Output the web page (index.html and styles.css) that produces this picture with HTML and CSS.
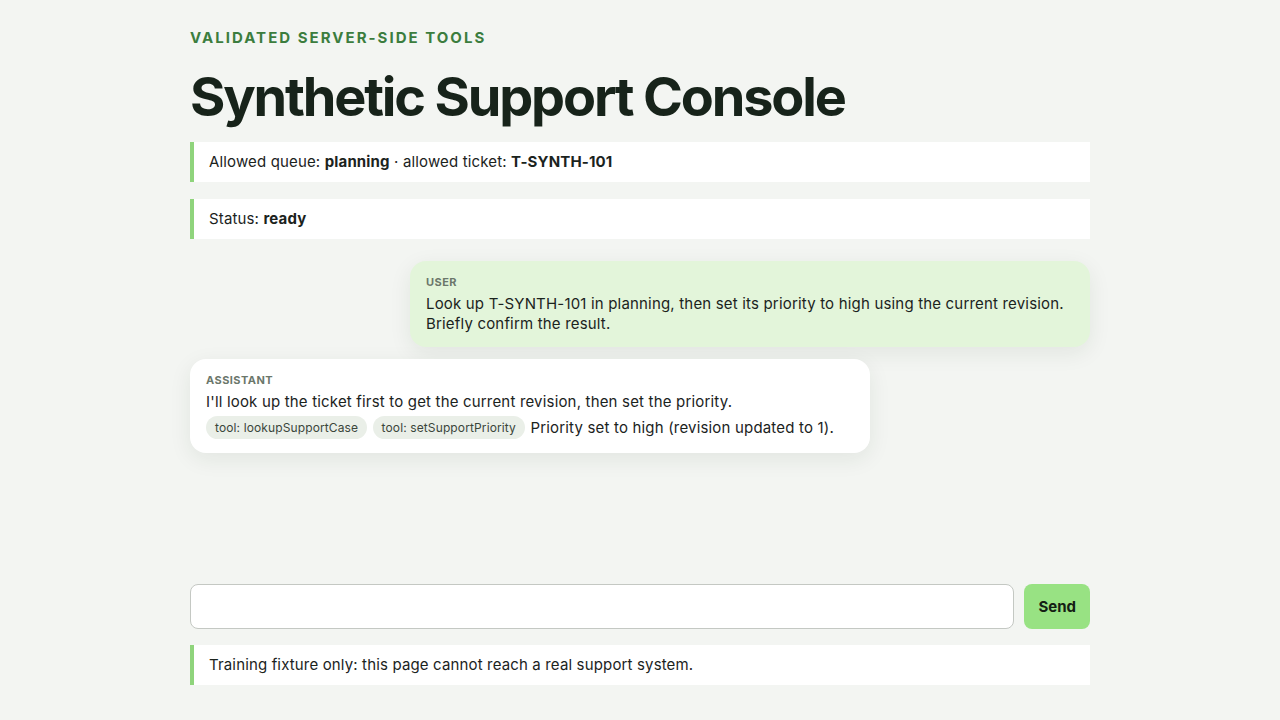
FILE: index.html
```html
<!doctype html>
<html lang="en">
  <head>
    <meta charset="UTF-8" />
    <meta name="viewport" content="width=device-width, initial-scale=1.0" />
    <title>Synthetic Support Console</title>
    <link rel="stylesheet" href="styles.css">
  </head>
  <body>
    <main class="page">
      <p class="eyebrow">Validated server-side tools</p>
      <h1 class="title">Synthetic Support Console</h1>

      <div class="note">
        Allowed queue: <strong>planning</strong> · allowed ticket:
        <strong>T-SYNTH-101</strong>
      </div>
      <div class="note">Status: <strong>ready</strong></div>

      <section class="chat">
        <div class="bubble user">
          <div class="role">User</div>
          <div class="text">
            Look up T-SYNTH-101 in planning, then set its priority to high using
            the current revision. Briefly confirm the result.
          </div>
        </div>
        <div class="bubble assistant">
          <div class="role">Assistant</div>
          <div class="text">
            I'll look up the ticket first to get the current revision, then set
            the priority.
          </div>
          <div class="text tools">
            <span class="pill">tool: lookupSupportCase</span>
            <span class="pill">tool: setSupportPriority</span>
            Priority set to high (revision updated to 1).
          </div>
        </div>
      </section>

      <form class="composer" onsubmit="return false">
        <input class="input" type="text" aria-label="Message" />
        <button class="send" type="submit">Send</button>
      </form>

      <div class="note">
        Training fixture only: this page cannot reach a real support system.
      </div>
    </main>
  </body>
</html>
```

FILE: styles.css
```css
body {
  margin: 0;
  background: #f3f5f2;
  color: #1b231d;
  font-family: Inter, "Liberation Sans", sans-serif;
}
.page {
  box-sizing: border-box;
  max-width: 900px;
  min-height: 100vh;
  margin: 0 auto;
  padding: 29px 0 35px;
  display: flex;
  flex-direction: column;
}
.eyebrow {
  margin: 0;
  font-size: 15px;
  line-height: 18px;
  font-weight: 700;
  letter-spacing: 0.135em;
  text-transform: uppercase;
  color: #3b7d3e;
}
.title {
  margin: 17px 0 12px;
  font-size: 54px;
  line-height: 66px;
  font-weight: 700;
  letter-spacing: -0.04em;
  color: #17231a;
}
.note {
  background: #fff;
  border-left: 4px solid #8fd47c;
  padding: 10px 15px;
  font-size: 15px;
  line-height: 20px;
  letter-spacing: 0.01em;
  margin-bottom: 17px;
}
.note strong {
  font-weight: 700;
}
.chat {
  flex: 1;
  display: flex;
  flex-direction: column;
  gap: 12px;
  padding-top: 5px;
}
.bubble {
  box-sizing: border-box;
  max-width: 680px;
  padding: 14px 16px 13px;
  border-radius: 16px;
  box-shadow: 0 6px 22px rgba(30, 50, 30, 0.08);
}
.bubble.user {
  align-self: flex-end;
  background: #e3f5da;
}
.bubble.assistant {
  align-self: flex-start;
  width: 680px;
  background: #fff;
}
.role {
  font-size: 11px;
  line-height: 14px;
  font-weight: 700;
  letter-spacing: 0.04em;
  text-transform: uppercase;
  color: #6b776b;
  margin-bottom: 5px;
}
.text {
  font-size: 15px;
  line-height: 20px;
  letter-spacing: 0.012em;
}
.tools {
  margin-top: 4px;
  line-height: 24px;
}
.pill {
  display: inline-block;
  background: #eaefe8;
  color: #3a463b;
  font-size: 12px;
  line-height: 23px;
  letter-spacing: 0.01em;
  padding: 0 9px;
  border-radius: 12px;
  margin-right: 1px;
  vertical-align: top;
}
.composer {
  display: flex;
  gap: 10px;
  margin: 0 0 16px;
}
.input {
  flex: 1;
  height: 45px;
  box-sizing: border-box;
  border: 1px solid #c4c8c3;
  border-radius: 8px;
  background: #fff;
  font: inherit;
  font-size: 15px;
  padding: 0 12px;
}
.send {
  height: 45px;
  padding: 0 14px;
  border: none;
  border-radius: 8px;
  background: #98e283;
  color: #142014;
  font-family: inherit;
  font-size: 15px;
  font-weight: 700;
  cursor: pointer;
}
.page > .note:last-child {
  margin-bottom: 0;
}
```
